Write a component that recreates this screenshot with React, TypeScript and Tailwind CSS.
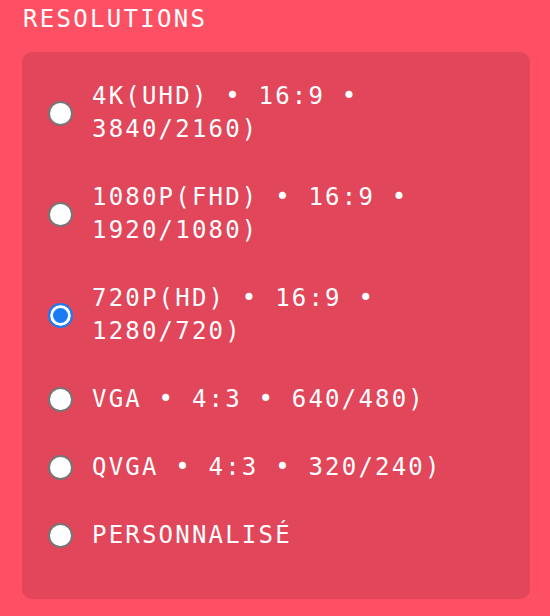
import { useState } from 'react'

const options = [
  { id: '4k', label: '4K(UHD) • 16:9 • 3840/2160)' },
  { id: '1080p', label: '1080P(FHD) • 16:9 • 1920/1080)' },
  { id: '720p', label: '720P(HD) • 16:9 • 1280/720)' },
  { id: 'vga', label: 'VGA • 4:3 • 640/480)' },
  { id: 'qvga', label: 'QVGA • 4:3 • 320/240)' },
  { id: 'custom', label: 'PERSONNALISÉ' },
]

export default function App() {
  const [selected, setSelected] = useState('720p')

  return (
    <div
      className="min-h-[616px] w-[550px] bg-[#fe5065] text-white pl-[22px] pr-[20px] pt-[3px] pb-4"
      style={{ fontFamily: '"DejaVu Sans Mono", "Liberation Mono", monospace' }}
    >
      <h2 className="text-[24px] leading-[33px] tracking-[2.3px] mb-[16px] pl-px">RESOLUTIONS</h2>
      <div className="bg-[#e1465a] rounded-[10px] pl-[26px] pr-[20px] pt-[28px] pb-[47px] flex flex-col gap-[35px]">
        {options.map((o) => (
          <label key={o.id} className="flex items-center gap-[19px] cursor-pointer">
            <input
              type="radio"
              name="resolution"
              checked={selected === o.id}
              onChange={() => setSelected(o.id)}
              className="appearance-none w-[25px] h-[25px] m-0 shrink-0 rounded-full bg-white border-2 border-[#767676] checked:border-[#1a7cf5] checked:bg-[#1a7cf5] checked:shadow-[inset_0_0_0_3px_#ffffff]"
            />
            <span className="text-[24px] leading-[33px] tracking-[2.2px]">{o.label}</span>
          </label>
        ))}
      </div>
    </div>
  )
}
